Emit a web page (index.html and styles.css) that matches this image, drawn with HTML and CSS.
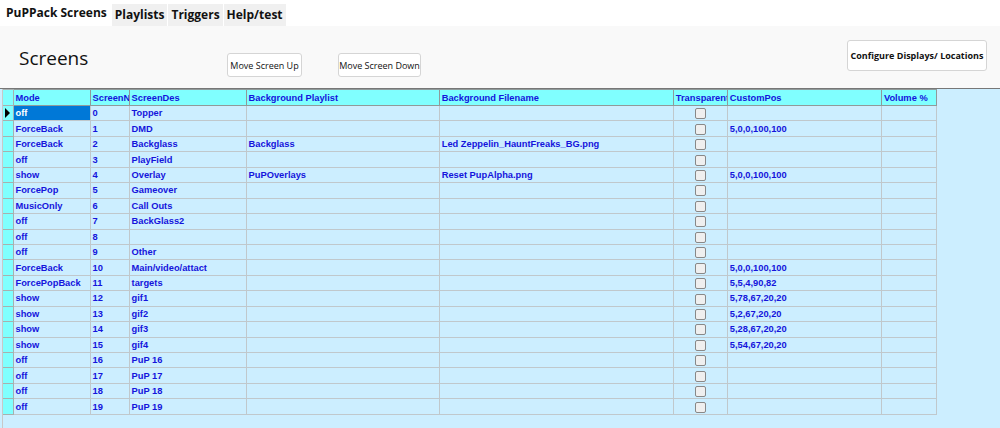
FILE: index.html
```html
<!DOCTYPE html>
<html lang="en">
<head>
    <meta charset="UTF-8">
    <title>PuP Pack Editor</title>
    <link rel="stylesheet" href="styles.css">
</head>
<body>
    <div class="tabs">
        <div class="tab active">PuPPack Screens</div>
        <div class="tab">Playlists</div>
        <div class="tab">Triggers</div>
        <div class="tab">Help/test</div>
    </div>

    <div class="toolbar">
        <h1>Screens</h1>
        <button class="btn btn-up">Move Screen Up</button>
        <button class="btn btn-down">Move Screen Down</button>
        <button class="btn btn-config">Configure Displays/ Locations</button>
    </div>

    <div class="grid">
        <table>
            <colgroup>
                <col class="c-rh">
                <col class="c-mode">
                <col class="c-num">
                <col class="c-des">
                <col class="c-list">
                <col class="c-file">
                <col class="c-trans">
                <col class="c-pos">
                <col class="c-vol">
            </colgroup>
            <thead>
                <tr>
                    <th class="rh"></th>
                    <th>Mode</th>
                    <th>ScreenNum</th>
                    <th>ScreenDes</th>
                    <th>Background Playlist</th>
                    <th>Background Filename</th>
                    <th>Transparent</th>
                    <th>CustomPos</th>
                    <th>Volume %</th>
                </tr>
            </thead>
            <tbody id="rows"></tbody>
        </table>
    </div>

    <script>
        const screens = [
            ['off', 0, 'Topper', '', '', ''],
            ['ForceBack', 1, 'DMD', '', '', '5,0,0,100,100'],
            ['ForceBack', 2, 'Backglass', 'Backglass', 'Led Zeppelin_HauntFreaks_BG.png', ''],
            ['off', 3, 'PlayField', '', '', ''],
            ['show', 4, 'Overlay', 'PuPOverlays', 'Reset PupAlpha.png', '5,0,0,100,100'],
            ['ForcePop', 5, 'Gameover', '', '', ''],
            ['MusicOnly', 6, 'Call Outs', '', '', ''],
            ['off', 7, 'BackGlass2', '', '', ''],
            ['off', 8, '', '', '', ''],
            ['off', 9, 'Other', '', '', ''],
            ['ForceBack', 10, 'Main/video/attact', '', '', '5,0,0,100,100'],
            ['ForcePopBack', 11, 'targets', '', '', '5,5,4,90,82'],
            ['show', 12, 'gif1', '', '', '5,78,67,20,20'],
            ['show', 13, 'gif2', '', '', '5,2,67,20,20'],
            ['show', 14, 'gif3', '', '', '5,28,67,20,20'],
            ['show', 15, 'gif4', '', '', '5,54,67,20,20'],
            ['off', 16, 'PuP 16', '', '', ''],
            ['off', 17, 'PuP 17', '', '', ''],
            ['off', 18, 'PuP 18', '', '', ''],
            ['off', 19, 'PuP 19', '', '', '']
        ];

        const body = document.getElementById('rows');
        screens.forEach(function(s, i) {
            const row = body.insertRow();
            const rh = row.insertCell();
            rh.className = 'rh';
            if (i === 0) {
                rh.innerHTML = '<span class="pointer"></span>';
            }
            const mode = row.insertCell();
            mode.textContent = s[0];
            if (i === 0) mode.className = 'selected';
            row.insertCell().textContent = s[1];
            row.insertCell().textContent = s[2];
            row.insertCell().textContent = s[3];
            row.insertCell().textContent = s[4];
            const chk = row.insertCell();
            chk.className = 'check';
            chk.innerHTML = '<span class="box"></span>';
            row.insertCell().textContent = s[5];
            row.insertCell();
        });
    </script>
</body>
</html>
```

FILE: styles.css
```css
body {
    margin: 0;
    background-color: #cceeff;
    font-family: "Open Sans", "Liberation Sans", sans-serif;
    height: 428px;
    overflow: hidden;
}
.tabs {
    display: flex;
    align-items: flex-end;
    height: 26px;
    padding-left: 3px;
    background-color: #ffffff;
}
.tab {
    height: 22px;
    line-height: 22px;
    padding: 0 3px;
    margin-right: 1px;
    font-size: 12px;
    font-weight: 700;
    color: #111;
    background-color: #f0f0f0;
}
.tab.active {
    height: 26px;
    line-height: 26px;
    background-color: #ffffff;
    padding: 0 3px;
    margin-right: 2px;
}
.toolbar {
    display: flex;
    align-items: flex-start;
    height: 62px;
    background-color: #f9f9f9;
    border-bottom: 1px solid #777;
}
.toolbar h1 {
    width: 70px;
    margin: 19px 0 0 19px;
    font-size: 19px;
    font-weight: 400;
    line-height: 26px;
    color: #111;
    white-space: nowrap;
}
.btn {
    height: 24px;
    padding: 0;
    font-family: "Open Sans", "Liberation Sans", sans-serif;
    font-size: 9px;
    color: #111;
    white-space: nowrap;
    background-color: #ffffff;
    border: 1px solid #d5d5d5;
    border-radius: 3px;
}
.btn-up {
    margin: 27px 0 0 138px;
    width: 75px;
}
.btn-down {
    margin: 27px 0 0 36px;
    width: 83px;
}
.btn-config {
    margin: 14px 13px 0 auto;
    width: 140px;
    height: 31px;
    font-weight: 700;
}
.grid {
    margin-left: 2px;
    border-left: 1px solid #c8c8c8;
    height: 340px;
}
table {
    table-layout: fixed;
    border-collapse: collapse;
    width: 934px;
}
.c-rh { width: 10px; }
.c-mode { width: 77px; }
.c-num { width: 39px; }
.c-des { width: 117px; }
.c-list { width: 193px; }
.c-file { width: 234px; }
.c-trans { width: 54px; }
.c-pos { width: 154px; }
.c-vol { width: 55px; }
th, td {
    border: 1px solid #c0c8cc;
    padding: 0 0 0 2px;
    font-family: "Liberation Sans", sans-serif;
    font-size: 9.3px;
    font-weight: 700;
    color: #1414dc;
    text-align: left;
    white-space: nowrap;
    overflow: hidden;
}
th {
    height: 15px;
    background-color: #80ffff;
    border-color: #909a9a;
}
td {
    height: 14.45px;
    line-height: 14px;
}
th.rh, td.rh {
    background-color: #80ffff;
    border-left: none;
    border-color: #a8b0b0;
    padding: 0;
}
.pointer {
    display: block;
    margin-left: 2px;
    width: 0;
    height: 0;
    border-top: 5px solid transparent;
    border-bottom: 5px solid transparent;
    border-left: 5px solid #000;
}
.selected {
    background-color: #0078d7;
    color: #ffffff;
}
.check {
    text-align: center;
    padding: 0;
}
.box {
    display: inline-block;
    width: 9px;
    height: 9px;
    vertical-align: middle;
    background-color: #efefef;
    border: 1px solid #888;
    border-radius: 2px;
}
```
